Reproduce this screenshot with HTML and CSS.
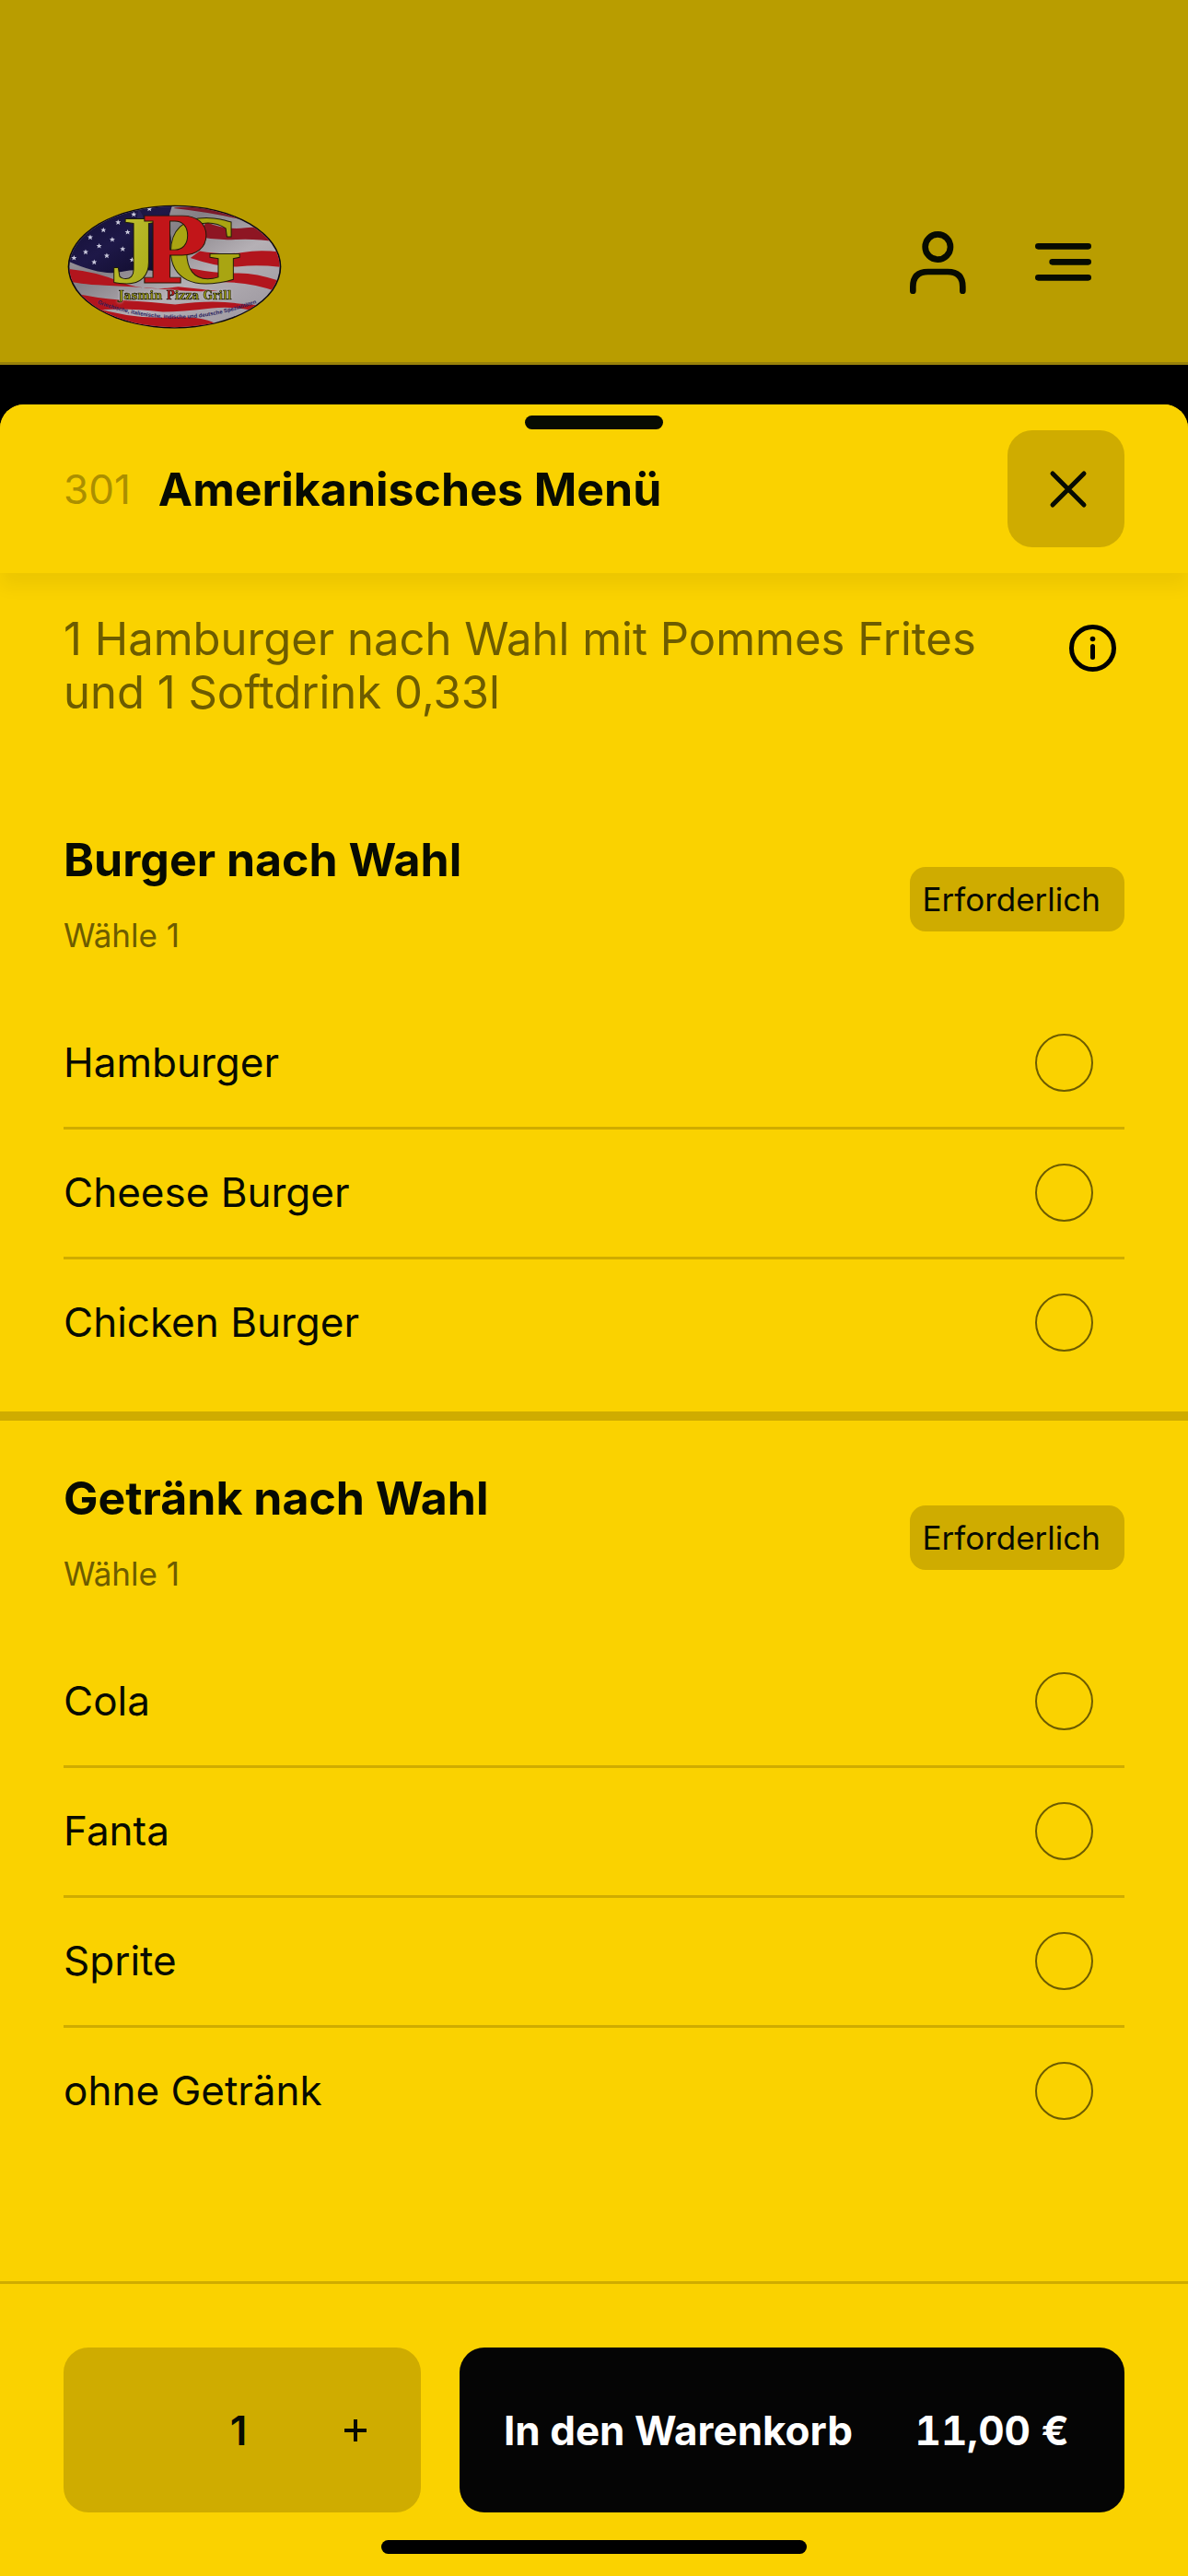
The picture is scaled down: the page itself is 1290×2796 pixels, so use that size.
FILE: index.html
```html
<!DOCTYPE html>
<html lang="de">
<head>
  <meta charset="UTF-8">
  <meta name="viewport" content="width=device-width, initial-scale=1">
  <title>Jasmin Pizza Grill</title>
  <link rel="stylesheet" href="styles.css">
</head>
<body>
  <header class="topbar">
    <a href="#" class="logo" aria-label="Jasmin Pizza Grill">
      <svg viewBox="68 66 700 406">
        <defs>
          <clipPath id="oval"><ellipse cx="418" cy="269" rx="343" ry="197"/></clipPath>
          <linearGradient id="cloth" x1="0" y1="0" x2="1" y2="1">
            <stop offset="0" stop-color="#b9b4b9"/>
            <stop offset="0.35" stop-color="#858086"/>
            <stop offset="0.6" stop-color="#b5b0b5"/>
            <stop offset="1" stop-color="#96919a"/>
          </linearGradient>
          <linearGradient id="canton" x1="0" y1="0" x2="1" y2="1">
            <stop offset="0" stop-color="#120d30"/>
            <stop offset="0.5" stop-color="#1e1848"/>
            <stop offset="1" stop-color="#0d0926"/>
          </linearGradient>
          <linearGradient id="gold" x1="0" y1="0" x2="1" y2="1">
            <stop offset="0" stop-color="#c6c63a"/>
            <stop offset="1" stop-color="#a3a60f"/>
          </linearGradient>
          <path id="star" d="M0-9 2.5-3H9L4 1.500 6 8 0 4-6 8-4 1.500-9-3H-2.500Z" fill="#c9c8dc"/>
          <path id="slogan" d="M166 389Q300 438 424 438T684 388"/>
        </defs>
        <ellipse cx="418" cy="269" rx="348" ry="201" fill="#0b0710"/>
        <g clip-path="url(#oval)">
          <rect x="68" y="66" width="700" height="406" fill="url(#cloth)"/>
          <g fill="#b2151d">
            <path d="M420 76Q500 66 600 98L640 116Q540 92 415 78Z" fill="#7b1a2a"/>
            <path d="M520 122Q580 150 650 142T770 154V190Q680 176 620 180T500 172Z" fill="#8e1623"/>
            <path d="M500 218Q580 232 640 222T770 222V270Q690 262 630 268T470 240Z"/>
            <path d="M470 274Q560 292 620 290T770 318V356Q680 322 600 320T460 306Z"/>
            <path d="M68 276Q160 284 240 318T430 334L560 348Q480 352 400 344T190 330T68 306Z"/>
            <path d="M68 350Q160 372 250 378T420 392Q540 376 620 388T770 384V440Q640 392 540 404T380 416Q240 400 150 412Z"/>
            <path d="M150 400Q280 440 400 434T560 460L520 480H240Z"/>
          </g>
          <path d="M68 66H412Q392 110 404 160T376 286Q300 272 240 286T68 250Z" fill="url(#canton)"/>
          <path d="M300 80Q330 110 310 170T330 270L300 272Q270 200 290 150Z" fill="#454079" opacity="0.3"/>
          <use href="#star" x="285" y="98"/>
          <use href="#star" x="336" y="80"/>
          <use href="#star" x="234" y="124"/>
          <use href="#star" x="186" y="149"/>
          <use href="#star" x="265" y="156"/>
          <use href="#star" x="143" y="173"/>
          <use href="#star" x="215" y="180"/>
          <use href="#star" x="172" y="201"/>
          <use href="#star" x="249" y="211"/>
          <use href="#star" x="128" y="221"/>
          <use href="#star" x="197" y="233"/>
          <use href="#star" x="90" y="240"/>
          <use href="#star" x="156" y="254"/>
          <use href="#star" x="280" y="246"/>
        </g>
        <g class="logo-initials">
          <text x="390" y="321" fill="#a9a512">G</text>
          <text x="206" y="321" fill="url(#gold)">J</text>
          <text class="logo-p" x="306" y="321" fill="#c21519">P</text>
        </g>
        <text class="logo-name" x="420" y="374">Jasmin <tspan class="logo-red">P</tspan>izza Grill</text>
        <text class="logo-slogan"><textPath href="#slogan">Griechische, italienische, indische und deutsche Spezialitäten</textPath></text>
      </svg>
    </a>
    <nav class="topbar-actions">
      <button type="button" class="icon-btn" aria-label="Konto">
        <svg class="icon-user" viewBox="144 151 183 204">
          <circle cx="235" cy="202" r="41"/>
          <path d="M154 345V332Q154 283 203 283H267Q316 283 316 332V345"/>
        </svg>
      </button>
      <button type="button" class="icon-btn" aria-label="Menü">
        <svg class="icon-menu" viewBox="552 192 183 123">
          <path d="M562 202H725M608 253H725M562 304H725"/>
        </svg>
      </button>
    </nav>
  </header>

  <main class="sheet">
    <div class="sheet-header">
      <span class="sheet-handle"></span>
      <span class="item-number">301</span>
      <h1 class="item-title">Amerikanisches Menü</h1>
      <button type="button" class="close-btn" aria-label="Schließen">
        <svg viewBox="0 0 40 40"><path d="M3 3 37 37M37 3 3 37"/></svg>
      </button>
    </div>

    <form class="sheet-body" id="item-form">
      <div class="description">
        <p>1 Hamburger nach Wahl mit Pommes Frites und 1 Softdrink 0,33l</p>
        <button type="button" class="icon-btn info-btn" aria-label="Information">
          <svg viewBox="0 0 51 51">
            <circle cx="25.500" cy="25.500" r="23"/>
            <path d="M25.500 23.500V35.500"/>
            <circle class="dot" cx="25.500" cy="15.500" r="2.800"/>
          </svg>
        </button>
      </div>

      <section class="group" role="radiogroup" aria-labelledby="burger-title">
        <div class="group-head">
          <div>
            <h2 id="burger-title">Burger nach Wahl</h2>
            <p class="hint">Wähle 1</p>
          </div>
          <span class="badge">Erforderlich</span>
        </div>
        <ul class="options">
          <li><label>Hamburger<input type="radio" name="burger"></label></li>
          <li><label>Cheese Burger<input type="radio" name="burger"></label></li>
          <li><label>Chicken Burger<input type="radio" name="burger"></label></li>
        </ul>
      </section>

      <section class="group" role="radiogroup" aria-labelledby="drink-title">
        <div class="group-head">
          <div>
            <h2 id="drink-title">Getränk nach Wahl</h2>
            <p class="hint">Wähle 1</p>
          </div>
          <span class="badge">Erforderlich</span>
        </div>
        <ul class="options">
          <li><label>Cola<input type="radio" name="drink"></label></li>
          <li><label>Fanta<input type="radio" name="drink"></label></li>
          <li><label>Sprite<input type="radio" name="drink"></label></li>
          <li><label>ohne Getränk<input type="radio" name="drink"></label></li>
        </ul>
      </section>
    </form>

    <footer class="cart-bar">
      <div class="cart-actions">
        <div class="counter">
          <output class="count">1</output>
          <button type="button" class="plus" aria-label="Mehr">
            <svg viewBox="0 0 24 24"><path d="M12 0V24M0 12H24"/></svg>
          </button>
        </div>
        <button type="submit" form="item-form" class="add-btn">
          <span>In den Warenkorb</span>
          <span class="price">11,00 €</span>
        </button>
      </div>
      <div class="home-indicator"></div>
    </footer>
  </main>
</body>
</html>
```

FILE: styles.css
```css
:root {
  --yellow: #fad200;
  --yellow-dim: #b99d00;
  --gold: #cfac00;
  --ink: #070b02;
  --muted: #6d5c00;
  --side: 69px;
}
* { margin: 0; padding: 0; box-sizing: border-box; }
body {
  font-family: Inter, "Liberation Sans", sans-serif;
  font-size: 44px;
  background: #000;
  color: var(--ink);
  min-height: 100vh;
  display: flex;
  flex-direction: column;
}
button { font: inherit; color: inherit; border: none; cursor: pointer; }
svg { display: block; overflow: visible; fill: none; stroke: currentColor; stroke-linecap: round; }
ul { list-style: none; }

/* Dimmed page header behind the sheet */
.topbar { display: flex; justify-content: space-between; align-items: center; height: 396px; padding: 186px 105px 0 73px; background: var(--yellow-dim); border-bottom: 3px solid #98810a; }
.topbar-actions { display: flex; align-items: center; gap: 75px; padding-bottom: 10px; }
.icon-btn { background: none; }
.icon-user, .icon-menu { width: 61px; stroke-width: 20; }
.logo svg { width: 233px; stroke: none; }
.logo-initials { font: bold 320px "Liberation Serif", serif; stroke: #1d1a08; stroke-width: 3; }
.logo-p { font: bold 296px "DejaVu Serif", serif; }
.logo-name { font: bold 37px "DejaVu Serif", serif; text-anchor: middle; fill: #a5a516; stroke: #15120a; stroke-width: 2; filter: drop-shadow(0 0 4px #cfcbd0); }
.logo-red { fill: #c21519; }
.logo-slogan { font: bold 18px "Liberation Sans", sans-serif; fill: #28205c; }

/* Sheet */
.sheet { flex: 1; display: flex; flex-direction: column; margin-top: 43px; background: var(--yellow); border-radius: 26px 26px 0 0; }
.sheet-header { position: relative; display: flex; align-items: center; padding: 28px var(--side); background: var(--yellow); border-radius: 26px 26px 0 0; box-shadow: 0 14px 20px 0 rgba(0, 0, 0, 0.06); }
.sheet-handle { position: absolute; top: 12px; left: 50%; width: 150px; height: 15px; margin-left: -75px; border-radius: 8px; background: var(--ink); }
.item-number { margin-right: 30px; color: #ab8f00; }
.item-title { flex: 1; font-size: 50px; font-weight: 700; }
.close-btn { display: flex; align-items: center; justify-content: center; width: 127px; height: 127px; padding-left: 4px; border-radius: 27px; background: var(--gold); }
.close-btn svg { width: 40px; stroke-width: 5; }

.sheet-body { flex: 1; }
.description { display: flex; justify-content: space-between; align-items: flex-start; gap: 80px; padding: 43px var(--side) 68px; font-size: 49px; line-height: 58px; color: var(--muted); }
.info-btn { flex: none; margin: 13px 9px 0 0; color: #000; }
.info-btn svg { width: 51px; stroke-width: 5; }
.info-btn .dot { fill: #000; stroke: none; }

.group { padding: 53px var(--side) 24px; }
.group + .group { border-top: 10px solid var(--gold); }
.group-head { display: flex; justify-content: space-between; align-items: center; margin-bottom: 48px; }
.group-head h2 { font-size: 50px; line-height: 62px; font-weight: 700; margin-bottom: 29px; }
.hint { font-size: 35px; line-height: 44px; color: var(--muted); }
.badge { margin-top: 12px; padding: 0 26px 0 14px; border-radius: 17px; background: var(--gold); font-size: 35px; line-height: 70px; }
.options li { border-bottom: 3px solid var(--gold); }
.options li:last-child { border-color: transparent; }
.options label { display: flex; justify-content: space-between; align-items: center; height: 138px; padding: 0 34px 2px 0; }
.options input { appearance: none; width: 63px; height: 63px; border: 2px solid var(--muted); border-radius: 50%; }
.options input:checked { background: var(--ink); }

/* Footer */
.cart-bar { padding: 69px var(--side) 24px; border-top: 3px solid var(--gold); }
.cart-actions { display: grid; grid-template-columns: 388px 1fr; gap: 42px; height: 179px; }
.counter { display: grid; grid-template-columns: repeat(3, 1fr); align-items: center; justify-items: center; padding-right: 8px; border-radius: 27px; background: var(--gold); }
.count { grid-column: 2; font-weight: 600; }
.plus { padding: 20px; background: none; }
.plus svg { width: 24px; stroke-width: 4; stroke-linecap: butt; }
.add-btn { display: flex; justify-content: space-between; align-items: center; padding: 0 60px 0 48px; border-radius: 27px; background: #050505; color: #fff; font-weight: 700; }
.price { font-variant-numeric: tabular-nums; }
.home-indicator { width: 462px; height: 15px; margin: 30px auto 0; border-radius: 8px; background: #000; }
```
